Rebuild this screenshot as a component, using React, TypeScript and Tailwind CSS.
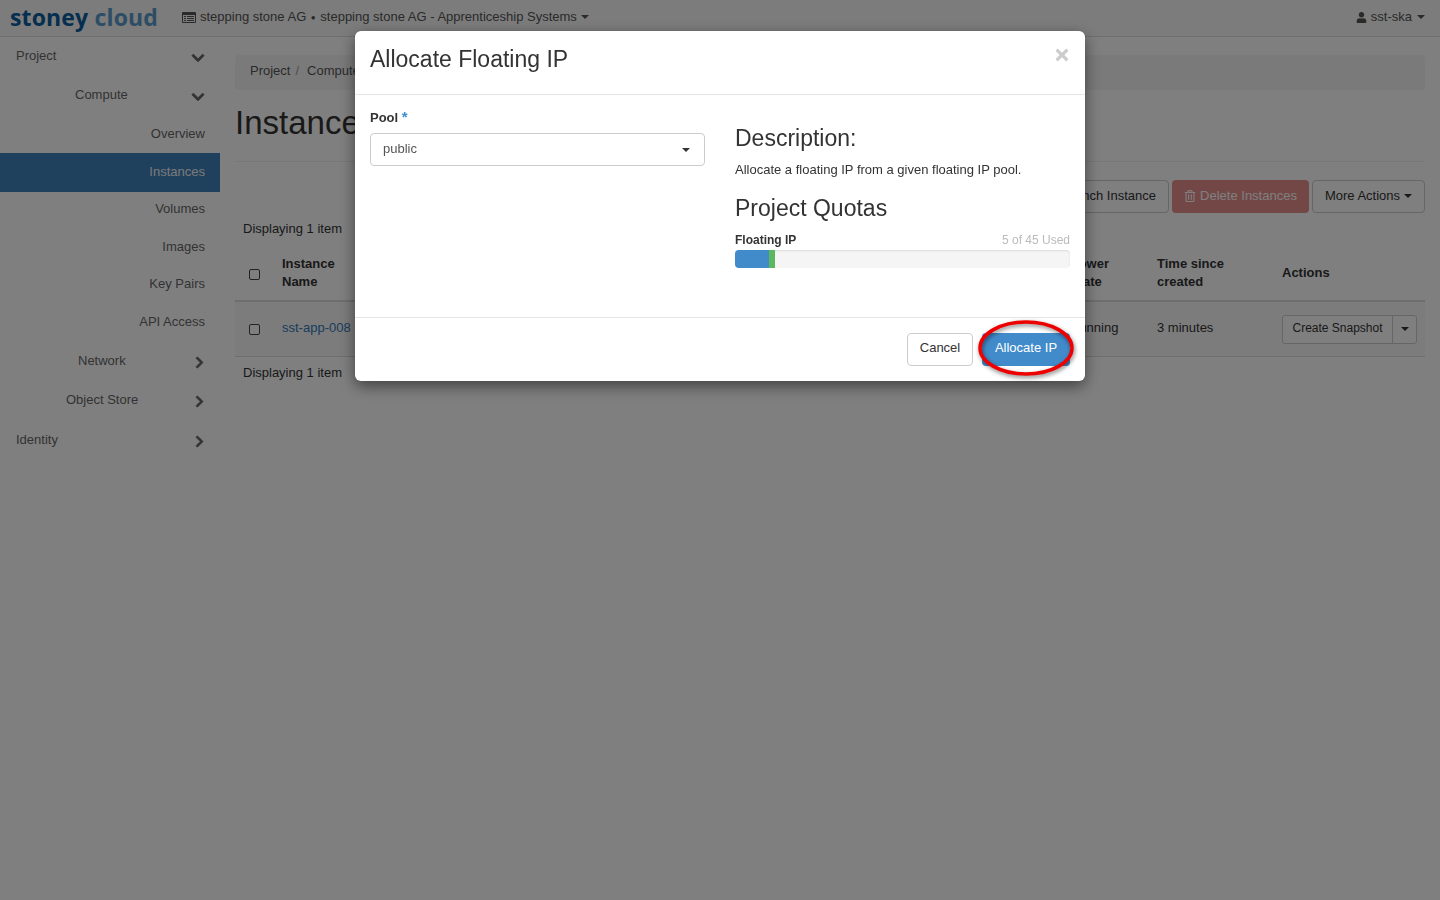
import { FaChevronDown, FaChevronRight, FaRegTrashAlt, FaTimes, FaUser } from 'react-icons/fa'

const sans = "font-['Liberation_Sans',Arial,sans-serif]"

function Caret({ className = 'border-x-4 border-t-4' }: { className?: string }) {
  return <span className={`inline-block w-0 h-0 border-x-transparent border-t-current ${className}`} />
}

function ListAltIcon() {
  return (
    <svg width="14" height="11" viewBox="0 0 14 11" className="mr-[4px]" fill="currentColor">
      <path d="M1 0h12a1 1 0 0 1 1 1v9a1 1 0 0 1-1 1H1a1 1 0 0 1-1-1V1a1 1 0 0 1 1-1zm0 3v7h12V3H1z" />
      <rect x="2" y="4" width="2" height="1" />
      <rect x="5" y="4" width="7" height="1" />
      <rect x="2" y="6" width="2" height="1" />
      <rect x="5" y="6" width="7" height="1" />
      <rect x="2" y="8" width="2" height="1" />
      <rect x="5" y="8" width="7" height="1" />
    </svg>
  )
}

function NavItem({ label, pad, chevron, active, h = 'h-[38px]' }: { label: string; pad: string; chevron?: 'down' | 'right'; active?: boolean; h?: string }) {
  return (
    <div className={`flex items-center pr-[15px] ${h} ${active ? 'bg-[#3e82bb] text-[#f4f4f4] pb-[1px]' : 'text-[#666]'}`}>
      <span className={`flex-1 ${pad}`}>{label}</span>
      {chevron === 'down' && <FaChevronDown className="text-[14px] text-[#666] mt-[3px] stroke-[30px]" />}
      {chevron === 'right' && <FaChevronRight className="text-[13px] text-[#666] mt-[3px] -mr-[1px] stroke-[30px]" />}
    </div>
  )
}

function Sidebar() {
  return (
    <aside className="w-[220px] shrink-0 bg-white text-[13px]">
      <NavItem label="Project" pad="pl-[16px]" chevron="down" />
      <div className="pt-[1px]"><NavItem label="Compute" pad="pl-[75px]" chevron="down" /></div>
      <div className="pt-[1px]"><NavItem label="Overview" pad="text-right" /></div>
      <NavItem label="Instances" pad="text-right" active h="h-[39px]" />
      <div className="-mt-[2px]">
        <NavItem label="Volumes" pad="text-right" h="h-[37.5px]" />
        <NavItem label="Images" pad="text-right" h="h-[37.5px]" />
        <NavItem label="Key Pairs" pad="text-right" h="h-[37.5px]" />
        <NavItem label="API Access" pad="text-right" h="h-[37.5px]" />
      </div>
      <div className="pt-[2px]"><NavItem label="Network" pad="pl-[78px]" chevron="right" /></div>
      <div className="pt-[1px]"><NavItem label="Object Store" pad="pl-[66px]" chevron="right" /></div>
      <div className="pt-[2px]"><NavItem label="Identity" pad="pl-[16px]" chevron="right" /></div>
    </aside>
  )
}

const rowCheck = 'block appearance-none w-[11px] h-[11px] border border-[#444] rounded-[2px] bg-white'

function InstancesTable() {
  return (
    <div className="text-[13px] text-[#333] leading-[18px]">
      <div className="px-2 h-[31px] flex items-center">Displaying 1 item</div>
      <div className="grid grid-cols-[39px_788px_87px_125px_151px] items-center h-[58px] pt-[2px] border-b-2 border-[#ddd] font-bold">
        <div className="pl-[14px] mt-[2px]"><input type="checkbox" className={rowCheck} /></div>
        <div className="pl-2">Instance<br />Name</div>
        <div className="pl-2">Power<br />State</div>
        <div className="pl-2">Time since<br />created</div>
        <div className="pl-2">Actions</div>
      </div>
      <div className="grid grid-cols-[39px_788px_87px_125px_151px] items-center h-[55px] border-b border-[#ddd] bg-[#f9f9f9]">
        <div className="pl-[14px]"><input type="checkbox" className={rowCheck} /></div>
        <div className="pl-2 pb-[2px] text-[#337ab7]">sst-app-008</div>
        <div className="pl-2 pb-[2px]">Running</div>
        <div className="pl-2 pb-[2px]">3 minutes</div>
        <div className="pl-2">
          <div className="flex w-[135px] h-[29px] border border-[#ccc] rounded-[3px] bg-white text-[12px]">
            <span className="flex-1 flex items-center justify-center pb-[2px]">Create Snapshot</span>
            <span className="w-[24px] border-l border-[#ccc] flex items-center justify-center"><Caret /></span>
          </div>
        </div>
      </div>
      <div className="px-2 h-[31px] flex items-center">Displaying 1 item</div>
    </div>
  )
}

function Modal() {
  return (
    <div className="fixed left-[355px] top-[31px] w-[730px] h-[350px] bg-white rounded-md shadow-[0_5px_15px_rgba(0,0,0,0.5)] text-[13px] text-[#333] flex flex-col">
      <div className="h-[64px] border-b border-[#e5e5e5] px-[15px] flex items-center justify-between">
        <h3 className="text-[23px] leading-[25px] -mt-[7px]">Allocate Floating IP</h3>
        <FaTimes className="text-[18px] text-[#ccc] -mt-[15px] -mr-[1px]" />
      </div>
      <div className="flex-1 flex gap-[30px] px-[15px]">
        <div className="w-[335px] pt-[14px]">
          <label className="block font-bold leading-[18px] mb-[6px]">Pool <span className="text-[#3e8fd0] text-[15px] leading-[16px] align-top">*</span></label>
          <div className="h-[33px] border border-[#ccc] rounded-[4px] pl-3 pr-[14px] flex items-center justify-between">
            <span className="text-[#555] -mt-[2px]">public</span>
            <Caret className="border-x-[4.5px] border-t-[4.5px]" />
          </div>
        </div>
        <div className="w-[335px] pt-[31px]">
          <h3 className="text-[23px] leading-[25px]">Description:</h3>
          <p className="mt-[10px] leading-[18px]">Allocate a floating IP from a given floating IP pool.</p>
          <h3 className="text-[23px] leading-[25px] mt-[17px]">Project Quotas</h3>
          <div className="mt-[10px] flex justify-between leading-[18px] text-[12px]">
            <strong>Floating IP</strong>
            <span className="text-[#bbb]">5 of 45 Used</span>
          </div>
          <div className="mt-[1px] h-[18px] rounded-[4px] bg-[#f5f5f5] overflow-hidden flex shadow-[inset_0_1px_2px_rgba(0,0,0,0.1)]">
            <div className="w-[34px] bg-[#428bca]" />
            <div className="w-[6px] bg-[#5cb85c]" />
          </div>
        </div>
      </div>
      <div className="h-[64px] border-t border-[#e5e5e5] px-[15px] flex items-start justify-end gap-[9px] pt-[15px]">
        <button className="w-[66px] h-[33px] border border-[#ccc] rounded-[4px] bg-white pb-[3px]">Cancel</button>
        <button className="w-[88px] h-[33px] rounded-[4px] bg-[#428bca] text-white pb-[3px]">Allocate IP</button>
      </div>
      {/* red annotation ring drawn over the submit button */}
      <svg className="absolute left-[620px] top-[287px] w-[104px] h-[62px] overflow-visible drop-shadow-[1px_2px_2px_rgba(0,0,0,0.5)]" viewBox="0 0 104 62">
        <ellipse cx="51" cy="30" rx="46" ry="26" fill="none" stroke="#ee0000" strokeWidth="3.5" />
      </svg>
    </div>
  )
}

export default function App() {
  return (
    <div className={`${sans} relative min-h-[900px] bg-white`}>
      <header className="h-[37px] bg-[#f8f8f8] border-b border-[#ddd] flex items-center text-[13px] text-[#555] pb-[2px]">
        <div className="w-[182px] pl-[10px] text-[23px] font-bold tracking-[0.15px] leading-none font-['Open_Sans',sans-serif] whitespace-nowrap">
          <span className="text-[#0b5d9e]">stoney</span> <span className="text-[#5a9ac8]">cloud</span>
        </div>
        <ListAltIcon />
        <span>stepping stone AG <span className="text-[8px] align-middle mx-[1px]">●</span> stepping stone AG - Apprenticeship Systems</span>
        <Caret className="ml-[4px] border-x-4 border-t-4" />
        <div className="ml-auto pr-[15px] flex items-center gap-[4px]">
          <FaUser className="text-[11px]" />
          <span>sst-ska</span>
          <Caret className="ml-[1px] border-x-4 border-t-4" />
        </div>
      </header>
      <div className="flex">
        <Sidebar />
        <main className="flex-1 pl-[15px] pr-[15px] pt-[18px]">
          <div className="h-[35px] bg-[#f5f5f5] rounded-[4px] px-[15px] pb-[3px] flex items-center text-[13px] text-[#555]">
            Project <span className="ml-[5px] mr-[8px] text-[#999]">/</span> Compute
          </div>
          <div className="mt-[15px] h-[57px] border-b border-[#eee]">
            <h1 className="text-[33px] leading-[36px] text-[#333]">Instances</h1>
          </div>
          <div className="mt-[18px] h-[33px] flex justify-end gap-[3px] text-[13px]">
            <button className="h-[33px] px-3 pb-[2px] border border-[#ccc] rounded-[4px] bg-white text-[#333]">Launch Instance</button>
            <button className="w-[137px] h-[33px] pb-[2px] rounded-[4px] bg-[#d9534f] opacity-65 text-white flex items-center justify-center gap-1"><FaRegTrashAlt className="text-[12px]" />Delete Instances</button>
            <button className="w-[113px] h-[33px] pb-[2px] border border-[#ccc] rounded-[4px] bg-white text-[#333] flex items-center justify-center gap-1">More Actions <Caret className="border-x-4 border-t-4" /></button>
          </div>
          <InstancesTable />
        </main>
      </div>
      <div className="fixed inset-0 bg-black/50" />
      <Modal />
    </div>
  )
}
